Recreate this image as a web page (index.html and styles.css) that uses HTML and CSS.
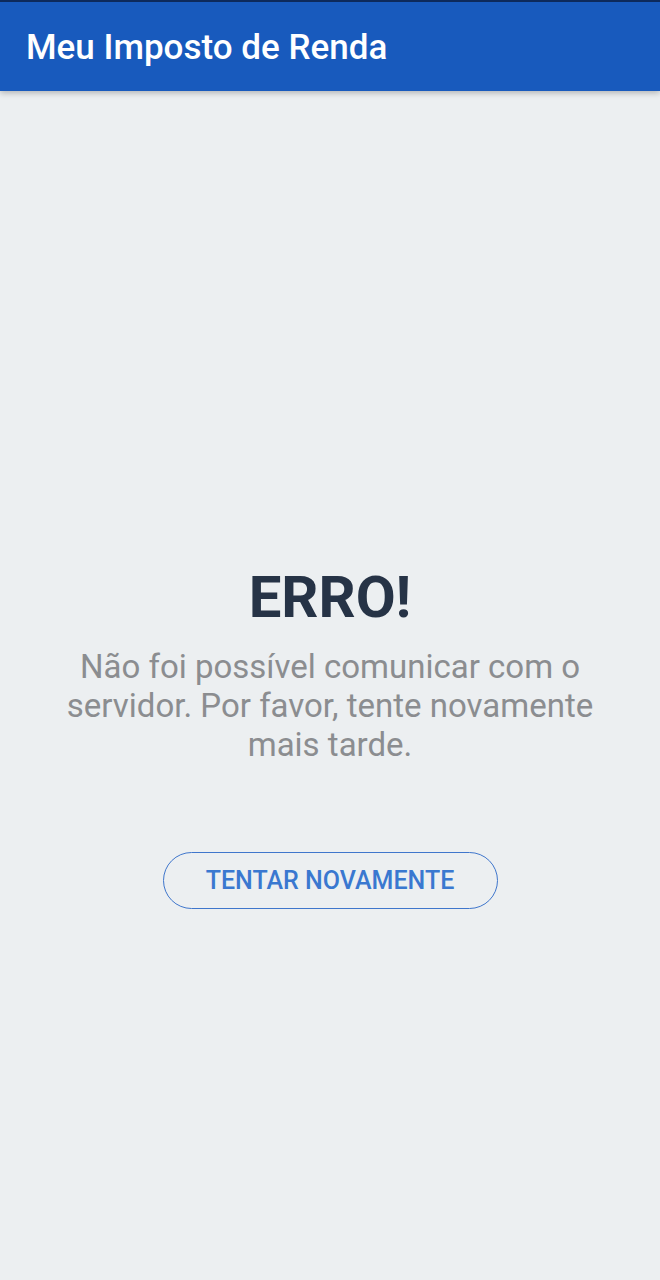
FILE: index.html
```html
<!DOCTYPE html>
<html lang="pt-BR">
<head>
    <meta charset="UTF-8">
    <meta name="viewport" content="width=device-width, initial-scale=1.0">
    <title>Meu Imposto de Renda</title>
    <link rel="stylesheet" href="styles.css">
</head>
<body>
    <header class="app-bar">
        <h1>Meu Imposto de Renda</h1>
    </header>
    <main class="content">
        <div class="error-box">
            <h2>ERRO!</h2>
            <p>Não foi possível comunicar com o servidor. Por favor, tente novamente mais tarde.</p>
            <button class="retry-button">TENTAR NOVAMENTE</button>
        </div>
    </main>
</body>
</html>
```

FILE: styles.css
```css
body {
    margin: 0;
    font-family: Roboto, "Noto Sans", sans-serif;
    background-color: #eceff1;
    height: 1280px;
    display: flex;
    flex-direction: column;
}

.app-bar {
    background-color: #185abd;
    border-top: 2px solid #0d2a5c;
    height: 89px;
    display: flex;
    align-items: center;
    padding-left: 26px;
    box-shadow: 0 2px 6px rgba(0, 0, 0, 0.25);
}

.app-bar h1 {
    margin: 0;
    color: #ffffff;
    font-size: 35px;
    font-weight: 500;
    margin-top: 1px;
}

.content {
    flex: 1;
    display: flex;
    justify-content: center;
    padding-top: 472px;
}

.error-box {
    width: 540px;
    text-align: center;
    display: flex;
    flex-direction: column;
    align-items: center;
}

.error-box h2 {
    margin: 0;
    color: #263346;
    font-size: 58px;
    font-weight: 700;
    line-height: 68px;
}

.error-box p {
    margin: 16px 0 0;
    color: #8b8d90;
    font-size: 33px;
    line-height: 39px;
}

.retry-button {
    margin-top: 88px;
    width: 335px;
    height: 57px;
    border: 1px solid #3f76cc;
    border-radius: 29px;
    background: transparent;
    color: #3a78d0;
    font-family: Roboto, "Noto Sans", sans-serif;
    font-size: 25px;
    font-weight: 500;
    cursor: pointer;
}
```
